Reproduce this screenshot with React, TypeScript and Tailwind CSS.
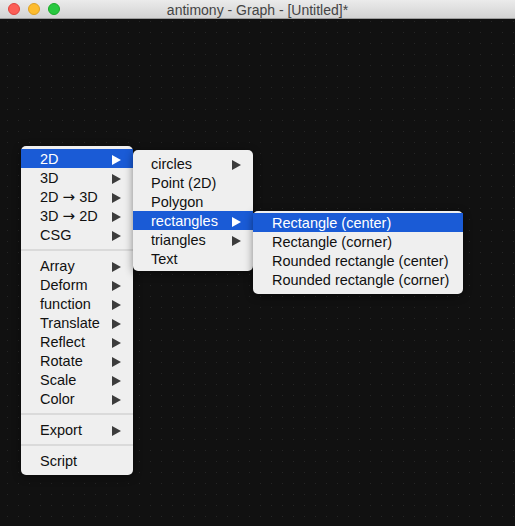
import React from 'react';

type Item = { label: string; sub?: boolean; active?: boolean } | 'sep';

const mainMenu: Item[] = [
  { label: '2D', sub: true, active: true },
  { label: '3D', sub: true },
  { label: '2D → 3D', sub: true },
  { label: '3D → 2D', sub: true },
  { label: 'CSG', sub: true },
  'sep',
  { label: 'Array', sub: true },
  { label: 'Deform', sub: true },
  { label: 'function', sub: true },
  { label: 'Translate', sub: true },
  { label: 'Reflect', sub: true },
  { label: 'Rotate', sub: true },
  { label: 'Scale', sub: true },
  { label: 'Color', sub: true },
  'sep',
  { label: 'Export', sub: true },
  'sep',
  { label: 'Script' },
];

const shapesMenu: Item[] = [
  { label: 'circles', sub: true },
  { label: 'Point (2D)' },
  { label: 'Polygon' },
  { label: 'rectangles', sub: true, active: true },
  { label: 'triangles', sub: true },
  { label: 'Text' },
];

const rectMenu: Item[] = [
  { label: 'Rectangle (center)', active: true },
  { label: 'Rectangle (corner)' },
  { label: 'Rounded rectangle (center)' },
  { label: 'Rounded rectangle (corner)' },
];

function Arrow({ active }: { active?: boolean }) {
  return (
    <svg width="9" height="10" viewBox="0 0 9 10" className="shrink-0">
      <path d="M0 0 L9 5 L0 10 Z" fill={active ? '#ffffff' : '#3c3c3c'} />
    </svg>
  );
}

// "2D → 3D": the arrow glyph is wider in the original font
function Label({ text }: { text: string }) {
  const parts = text.split('→');
  if (parts.length === 1) return <span className="whitespace-nowrap">{text}</span>;
  return (
    <span className="whitespace-nowrap">
      {parts[0]}
      <span className="font-['DejaVu_Sans',sans-serif] text-[15px]">→</span>
      {parts[1]}
    </span>
  );
}

function Menu({ items, className, pad }: { items: Item[]; className: string; pad: string }) {
  return (
    <div
      className={`absolute flex flex-col rounded-[5px] bg-[#efefef] shadow-[0_2px_8px_rgba(0,0,0,0.45)] ${pad} ${className}`}
    >
      {items.map((item, i) =>
        item === 'sep' ? (
          <div key={i} className="flex h-[12px] items-center">
            <div className="h-[2px] w-full bg-[#dadada]" />
          </div>
        ) : (
          <div
            key={i}
            className={`flex h-[19px] items-center justify-between pl-[19px] pr-[12px] pt-[2px] text-[14.5px] leading-none ${
              item.active ? 'bg-[#1a5bd6] text-white' : 'text-[#111]'
            }`}
          >
            <Label text={item.label} />
            {item.sub && <Arrow active={item.active} />}
          </div>
        )
      )}
    </div>
  );
}

export default function App() {
  return (
    <div className="flex h-[526px] w-[515px] flex-col overflow-hidden bg-[#111111] font-['Liberation_Sans',Arial,sans-serif]">
      {/* title bar */}
      <div className="relative flex h-[19px] shrink-0 items-center justify-center border-b border-[#9d9d9d] bg-gradient-to-b from-[#ebebeb] to-[#d3d3d3]">
        <div className="absolute left-[8px] top-[3px] flex gap-[8px]">
          <span className="h-[12px] w-[12px] rounded-full border border-[#e0443e] bg-[#fc5f57]" />
          <span className="h-[12px] w-[12px] rounded-full border border-[#dea123] bg-[#fdbc2e]" />
          <span className="h-[12px] w-[12px] rounded-full border border-[#1aab29] bg-[#28c840]" />
        </div>
        <span className="pt-[1px] text-[14px] leading-none text-[#444]">antimony - Graph - [Untitled]*</span>
      </div>

      {/* canvas */}
      <div className="relative flex-1 bg-[radial-gradient(circle,#262626_0.8px,transparent_1px)] bg-[size:11px_11px] bg-[position:2px_8px]">
        <Menu items={mainMenu} pad="pt-[3px] pb-[5px]" className="left-[21px] top-[127px] w-[112px]" />
        <Menu items={shapesMenu} pad="pt-[4px] pb-[3px] [&>div]:pl-[18px]" className="left-[133px] top-[131px] w-[120px]" />
        <Menu items={rectMenu} pad="pt-[2px] pb-[5px]" className="left-[253px] top-[192px] w-[210px]" />
      </div>
    </div>
  );
}
